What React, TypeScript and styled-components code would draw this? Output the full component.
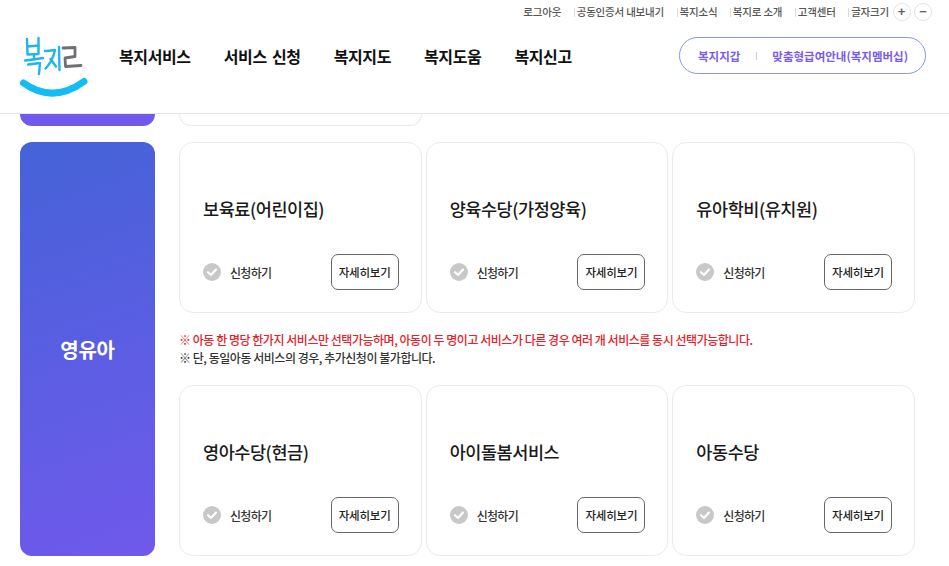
import styled, { createGlobalStyle } from "styled-components";

const GlobalStyle = createGlobalStyle`
  html, body {
    margin: 0;
    padding: 0;
    background: #fff;
  }

  body {
    width: 949px;
    height: 566px;
    overflow: hidden;
    font-family: "Noto Sans CJK KR", "Noto Sans", sans-serif;
  }

  * {
    box-sizing: border-box;
  }
`;

const utilLinks = ["공동인증서 내보내기", "복지소식", "복지로 소개", "고객센터"];
const navItems = ["복지서비스", "서비스 신청", "복지지도", "복지도움", "복지신고"];

const firstRow = ["보육료(어린이집)", "양육수당(가정양육)", "유아학비(유치원)"];
const secondRow = ["영아수당(현금)", "아이돌봄서비스", "아동수당"];

const Logo = () => (
  <svg width="76" height="70" viewBox="0 0 76 70" fill="none">
    <g stroke="#1fb6e8" strokeWidth="2.4" strokeLinecap="round" strokeLinejoin="round">
      <path d="M12 7 L12.5 22.5 L23.5 22 L23.5 6" />
      <path d="M12.5 14.5 L23.5 13.5" />
      <path d="M10 28.5 C15 28 22 27 28 26" />
      <path d="M19 23 L19 27" />
      <path d="M13 32.5 L25 31 L24 42" />
      <path d="M30 19 C33 19 37 18.5 40 18 C38.5 25 35 32 30.5 36.5" />
      <path d="M35.5 27 L41 34.5" />
      <path d="M44 15 L44.5 38" />
    </g>
    <g stroke="#6f7074" strokeWidth="2.8" strokeLinecap="round" strokeLinejoin="round">
      <path d="M48 16 L60 15.5 L60 24.5 L50 26 L50.5 34.5 L66 33.5" />
    </g>
    <path d="M8.5 51 Q 38 72 69 49.5" stroke="#12bdf3" strokeWidth="7" strokeLinecap="round" />
  </svg>
);

const CheckIcon = () => (
  <svg width="18" height="18" viewBox="0 0 18 18">
    <circle cx="9" cy="9" r="9" fill="#c8c8c8" />
    <path d="M5 9.2 L8 12 L13 6.6" fill="none" stroke="#fff" strokeWidth="2.2" strokeLinecap="round" strokeLinejoin="round" />
  </svg>
);

const App = () => {
  return (
    <Page>
      <GlobalStyle />
      <Header>
        <UtilBar>
          <UtilLink>로그아웃</UtilLink>
          {utilLinks.map((label) => (
            <UtilLink key={label} $divided>
              {label}
            </UtilLink>
          ))}
          <UtilLink $divided>글자크기</UtilLink>
          <ZoomButton>+</ZoomButton>
          <ZoomButton>−</ZoomButton>
        </UtilBar>
        <MainBar>
          <LogoBox>
            <Logo />
          </LogoBox>
          <Nav>
            {navItems.map((label) => (
              <NavItem key={label}>{label}</NavItem>
            ))}
          </Nav>
          <QuickBox>
            <QuickLink>복지지갑</QuickLink>
            <QuickDivider />
            <QuickLink>맞춤형급여안내(복지멤버십)</QuickLink>
          </QuickBox>
        </MainBar>
      </Header>

      <Main>
        <ClippedSection>
          <ClippedCategory />
          <ClippedCard />
        </ClippedSection>

        <Section>
          <Category>영유아</Category>
          <Content>
            <CardRow>
              {firstRow.map((title) => (
                <ServiceCard key={title} title={title} />
              ))}
            </CardRow>
            <Notice>
              <NoticeLine $red>※ 아동 한 명당 한가지 서비스만 선택가능하며, 아동이 두 명이고 서비스가 다른 경우 여러 개 서비스를 동시 선택가능합니다.</NoticeLine>
              <NoticeLine>※ 단, 동일아동 서비스의 경우, 추가신청이 불가합니다.</NoticeLine>
            </Notice>
            <CardRow>
              {secondRow.map((title) => (
                <ServiceCard key={title} title={title} />
              ))}
            </CardRow>
          </Content>
        </Section>
      </Main>
    </Page>
  );
};

const ServiceCard = ({ title }: { title: string }) => (
  <Card>
    <CardTitle>{title}</CardTitle>
    <CardFooter>
      <ApplyLabel>
        <CheckIcon />
        신청하기
      </ApplyLabel>
      <DetailButton>자세히보기</DetailButton>
    </CardFooter>
  </Card>
);

const Page = styled.div`
  width: 949px;
  height: 566px;
  overflow: hidden;
  background: #fff;
`;

const Header = styled.header`
  height: 114px;
  border-bottom: 1px solid #e6e6e6;
`;

const UtilBar = styled.div`
  display: flex;
  justify-content: flex-end;
  align-items: center;
  height: 23px;
  padding-right: 17px;
  color: #555;
`;

const UtilLink = styled.span<{ $divided?: boolean }>`
  position: relative;
  margin-left: ${(p) => (p.$divided ? "15.5px" : "0")};
  font-size: 10.5px;
  font-weight: 500;
  letter-spacing: -0.2px;
  line-height: 14px;
  white-space: nowrap;

  &::before {
    content: "";
    display: ${(p) => (p.$divided ? "block" : "none")};
    position: absolute;
    left: -3px;
    top: 3px;
    width: 1px;
    height: 9px;
    background: #ddd;
  }
`;

const ZoomButton = styled.span`
  display: flex;
  justify-content: center;
  align-items: center;
  width: 18px;
  height: 18px;
  margin-left: 3.5px;
  border: 1px solid #e3e3e3;
  border-radius: 50%;
  color: #666;
  font-family: "Liberation Sans", sans-serif;
  font-size: 13px;
  font-weight: 700;
`;

const MainBar = styled.div`
  display: flex;
  align-items: flex-start;
  height: 90px;
  padding-left: 15px;
`;

const LogoBox = styled.div`
  width: 104px;
  height: 70px;
  margin-top: 9px;
`;

const Nav = styled.nav`
  display: flex;
  gap: 33px;
  margin-top: 21px;
`;

const NavItem = styled.span`
  color: #111;
  font-size: 16px;
  font-weight: 700;
  letter-spacing: -0.38px;
  word-spacing: 2px;
  line-height: 24px;
  white-space: nowrap;
`;

const QuickBox = styled.div`
  display: flex;
  align-items: center;
  width: 247px;
  height: 37px;
  margin-top: 14px;
  margin-left: auto;
  margin-right: 23px;
  padding-left: 18px;
  border: 1px solid #8498ee;
  border-radius: 19px;
`;

const QuickLink = styled.span`
  color: #7a5ce8;
  font-size: 11.5px;
  font-weight: 700;
  white-space: nowrap;
`;

const QuickDivider = styled.span`
  width: 1px;
  height: 8px;
  margin: 0 15px 0 16px;
  background: #ccc;
`;

const Main = styled.main`
  padding: 0 34px 0 20px;
`;

const ClippedSection = styled.div`
  display: flex;
  gap: 24px;
  height: 12px;
  margin-bottom: 16px;
`;

const ClippedCategory = styled.div`
  width: 135px;
  border-radius: 0 0 12px 12px;
  background: #7059ec;
`;

const ClippedCard = styled.div`
  width: 243px;
  border: 1px solid #ebebeb;
  border-top: none;
  border-radius: 0 0 14px 14px;
`;

const Section = styled.section`
  display: flex;
  gap: 24px;
`;

const Category = styled.div`
  display: flex;
  justify-content: center;
  align-items: center;
  flex: none;
  width: 135px;
  height: 414px;
  border-radius: 12px;
  background: linear-gradient(160deg, #4563d8 0%, #7059ec 100%);
  color: #fff;
  font-size: 20px;
  font-weight: 700;
  letter-spacing: -0.3px;
`;

const Content = styled.div`
  width: 736px;
`;

const CardRow = styled.div`
  display: grid;
  grid-template-columns: repeat(3, 1fr);
  gap: 4px;
`;

const Card = styled.article`
  display: flex;
  flex-direction: column;
  height: 171px;
  padding: 53px 22px 22px 23px;
  border: 1px solid #ebebeb;
  border-radius: 14px;
  background: #fff;
`;

const CardTitle = styled.h3`
  margin: 0;
  color: #1a1a1a;
  font-size: 17.5px;
  font-weight: 500;
  letter-spacing: -0.45px;
  line-height: 26px;
  white-space: nowrap;
`;

const CardFooter = styled.div`
  display: flex;
  justify-content: space-between;
  align-items: center;
  margin-top: auto;
`;

const ApplyLabel = styled.span`
  display: flex;
  align-items: center;
  gap: 9px;
  color: #333;
  font-size: 12px;
  font-weight: 500;
  letter-spacing: -0.7px;
`;

const DetailButton = styled.span`
  display: flex;
  justify-content: center;
  align-items: center;
  width: 68px;
  height: 36px;
  border: 1px solid #666;
  border-radius: 7px;
  color: #222;
  font-size: 11.5px;
  font-weight: 500;
  letter-spacing: -0.2px;
  white-space: nowrap;
`;

const Notice = styled.div`
  display: flex;
  flex-direction: column;
  justify-content: center;
  height: 72px;
`;

const NoticeLine = styled.p<{ $red?: boolean }>`
  margin: 0;
  color: ${(p) => (p.$red ? "#e8202a" : "#333")};
  font-size: 12px;
  font-weight: 500;
  letter-spacing: -0.47px;
  line-height: 18px;
  white-space: nowrap;
`;

export default App;
